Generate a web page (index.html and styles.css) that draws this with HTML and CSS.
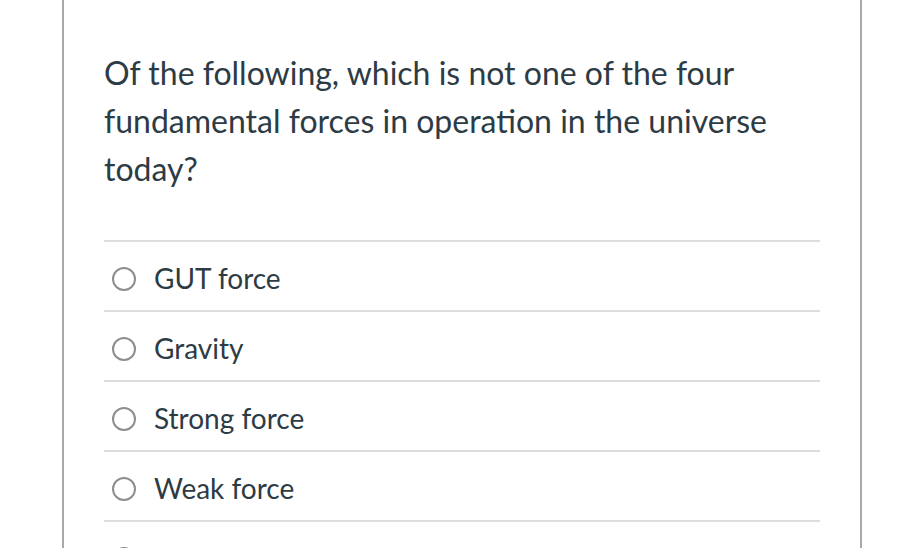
FILE: index.html
```html
<!DOCTYPE html>
<html>
<head>
<meta charset="utf-8">
<link rel="stylesheet" href="styles.css">
</head>
<body>
<div class="quiz">
  <div class="question">Of the following, which is not one of the four fundamental forces in operation in the universe today?</div>
  <ul class="answers">
    <li class="answer"><span class="radio"></span><span class="label">GUT force</span></li>
    <li class="answer"><span class="radio"></span><span class="label">Gravity</span></li>
    <li class="answer"><span class="radio"></span><span class="label">Strong force</span></li>
    <li class="answer"><span class="radio"></span><span class="label">Weak force</span></li>
    <li class="answer"><span class="radio"></span><span class="label">There are more than four</span></li>
  </ul>
</div>
</body>
</html>
```

FILE: styles.css
```css
html, body {
  margin: 0;
  padding: 0;
  background: #ffffff;
  overflow: hidden;
  height: 548px;
}
body {
  font-family: Lato, "Noto Sans", sans-serif;
  color: #2d3b45;
}
.quiz {
  margin-left: 62px;
  width: 716px;
  min-height: 548px;
  border-left: 2px solid #a8a8a8;
  border-right: 2px solid #a8a8a8;
  padding: 49px 40px 0 40px;
  box-sizing: content-box;
}
.question {
  font-size: 32px;
  line-height: 48px;
}
.answers {
  list-style: none;
  margin: 47px 0 0 0;
  padding: 0;
}
.answer {
  border-top: 2px solid #dddddd;
  height: 68px;
  display: flex;
  align-items: center;
  padding-left: 8px;
}
.radio {
  width: 20px;
  height: 20px;
  border: 2.6px solid #8e8e8e;
  border-radius: 50%;
  flex: none;
  margin-right: 18px;
  margin-top: 5px;
}
.label {
  font-size: 28px;
  line-height: 30px;
  margin-top: 3px;
}
```
